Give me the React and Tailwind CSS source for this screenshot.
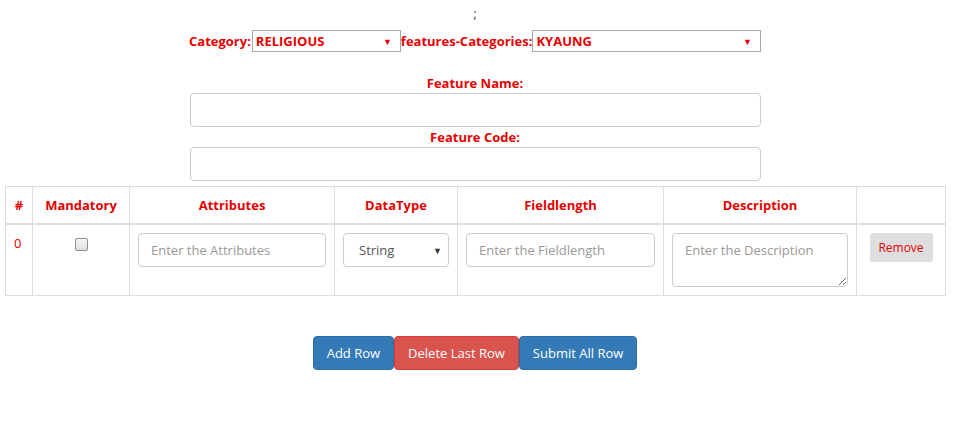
import React from "react";

const RED = "text-[#e60000]";

function Arrow({ className = "" }) {
  return (
    <span className={`pointer-events-none absolute top-1/2 -translate-y-1/2 text-[9px] leading-none ${className}`}>▼</span>
  );
}

export default function App() {
  return (
    <div className="w-[950px] bg-white text-[14px] leading-[20px]" style={{ fontFamily: '"Open Sans", "Noto Sans", sans-serif' }}>
      <div className="pt-[4px] text-center text-[#333] text-[12px] leading-[20px]">;</div>

      <div className="mx-auto mt-[6px] flex h-[22px] w-[572px] items-center font-bold text-[13px]">
        <span className={`${RED} whitespace-nowrap pr-[1px]`}>Category:</span>
        <div className="relative h-[22px] w-[149px] shrink-0">
          <select defaultValue="RELIGIOUS" className={`h-full w-full appearance-none border border-[#a9a9a9] bg-white pl-[3px] font-bold text-[13px] ${RED}`}>
            <option>RELIGIOUS</option>
          </select>
          <Arrow className={`right-[9px] ${RED}`} />
        </div>
        <span className={`${RED} whitespace-nowrap`}>features-Categories:</span>
        <div className="relative h-[22px] min-w-0 flex-1">
          <select defaultValue="KYAUNG" className={`h-full w-full appearance-none border border-[#a9a9a9] bg-white pl-[3px] font-bold text-[13px] ${RED}`}>
            <option>KYAUNG</option>
          </select>
          <Arrow className={`right-[9px] ${RED}`} />
        </div>
      </div>

      <div className="mx-auto mt-[21px] w-[571px]">
        <div className={`text-center font-bold text-[13px] ${RED}`}>Feature Name:</div>
        <input className="block h-[34px] w-full rounded-[4px] border border-[#ccc] bg-white px-3" />
        <div className={`text-center font-bold text-[13px] ${RED}`}>Feature Code:</div>
        <input className="block h-[34px] w-full rounded-[4px] border border-[#ccc] bg-white px-3" />
      </div>

      <div className="mx-[5px] mt-[5px] w-[940px]">
        <table className="w-full table-fixed border-collapse border border-[#ddd]">
          <colgroup>
            <col className="w-[27px]" />
            <col className="w-[97px]" />
            <col className="w-[205px]" />
            <col className="w-[123px]" />
            <col className="w-[206px]" />
            <col className="w-[193px]" />
            <col className="w-[89px]" />
          </colgroup>
          <thead>
            <tr className={`font-bold text-[13px] ${RED}`}>
              <th className="border border-b-2 border-[#ddd] px-[6px] py-[8px] text-center leading-[20px]">#</th>
              <th className="border border-b-2 border-[#ddd] px-[4px] py-[8px] text-center leading-[20px]">Mandatory</th>
              <th className="border border-b-2 border-[#ddd] p-[8px] text-center leading-[20px]">Attributes</th>
              <th className="border border-b-2 border-[#ddd] p-[8px] text-center leading-[20px]">DataType</th>
              <th className="border border-b-2 border-[#ddd] p-[8px] text-center leading-[20px]">Fieldlength</th>
              <th className="border border-b-2 border-[#ddd] p-[8px] text-center leading-[20px]">Description</th>
              <th className="border border-b-2 border-[#ddd] p-[8px]"></th>
            </tr>
          </thead>
          <tbody>
            <tr className="align-top">
              <td className={`border border-[#ddd] p-[8px] text-[13px] ${RED}`}>0</td>
              <td className="border border-[#ddd] p-[8px] text-center">
                <input type="checkbox" className="mt-[5px] inline-block h-[13px] w-[13px] appearance-none rounded-[2px] border border-[#8f8f8f] bg-gradient-to-b from-[#f6f6f6] to-[#dedede] align-top" />
              </td>
              <td className="border border-[#ddd] p-[8px]">
                <input placeholder="Enter the Attributes" className="block h-[34px] w-full rounded-[4px] border border-[#ccc] bg-white px-3 text-[13px] text-[#555] placeholder:text-[#999]" />
              </td>
              <td className="border border-[#ddd] p-[8px]">
                <div className="relative h-[34px]">
                  <select defaultValue="String" className="h-full w-full appearance-none rounded-[4px] border border-[#ccc] bg-white pl-[15px] text-[13px] text-[#555]">
                    <option>String</option>
                  </select>
                  <Arrow className="right-[7px] text-[#333]" />
                </div>
              </td>
              <td className="border border-[#ddd] p-[8px]">
                <input placeholder="Enter the Fieldlength" className="block h-[34px] w-full rounded-[4px] border border-[#ccc] bg-white px-3 text-[13px] text-[#555] placeholder:text-[#999]" />
              </td>
              <td className="border border-[#ddd] p-[8px]">
                <textarea placeholder="Enter the Description" className="block h-[54px] w-full resize-y rounded-[4px] border border-[#ccc] bg-white px-3 py-[6px] text-[13px] leading-[20px] text-[#555] placeholder:text-[#999]" />
              </td>
              <td className="border border-[#ddd] p-[8px] text-center">
                <button className={`h-[29px] w-[63px] rounded-[3px] bg-[#dedede] text-[12px] ${RED}`}>Remove</button>
              </td>
            </tr>
          </tbody>
        </table>
      </div>

      <div className="mt-[40px] flex justify-center text-[13px] text-white">
        <button className="h-[34px] rounded-[4px] border border-[#2e6da4] bg-[#337ab7] px-[13px]">Add Row</button>
        <button className="h-[34px] rounded-[4px] border border-[#d43f3a] bg-[#d9534f] px-[13px]">Delete Last Row</button>
        <button className="h-[34px] rounded-[4px] border border-[#2e6da4] bg-[#337ab7] px-[13px]">Submit All Row</button>
      </div>
      <div className="h-[77px]" />
    </div>
  );
}
